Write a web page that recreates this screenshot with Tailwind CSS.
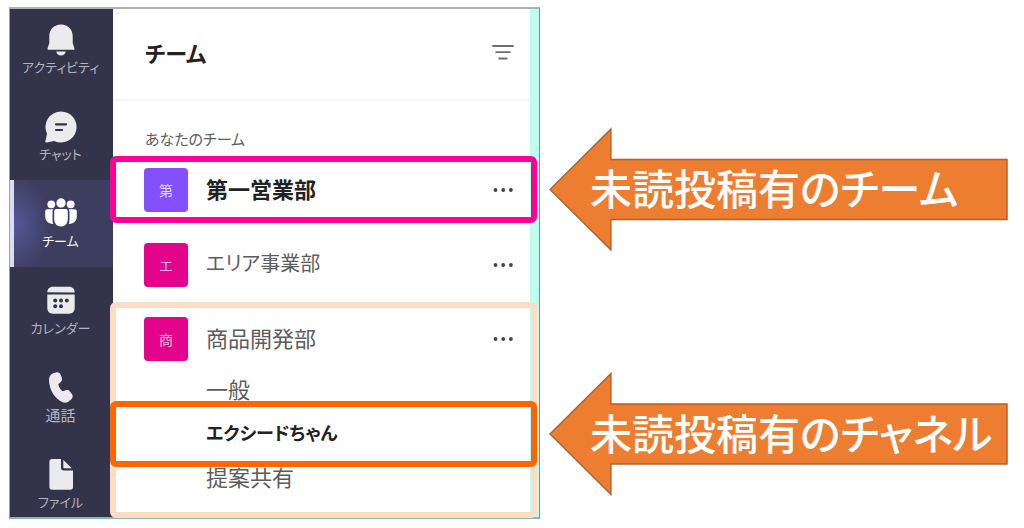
<!DOCTYPE html>
<html lang="ja">
<head>
<meta charset="utf-8">
<meta name="viewport" content="width=device-width, initial-scale=1">
<title>チーム</title>
<script src="https://cdn.jsdelivr.net/npm/@tailwindcss/browser@4"></script>
</head>
<body class="flex items-start gap-[9px] bg-white pt-[7px] pr-4 pl-[9px] font-['Noto_Sans_CJK_JP',sans-serif] [font-feature-settings:'palt']">

<div class="flex min-w-0 flex-1 border-t-2 border-r border-b-2 border-l border-t-[#b0b0b0] border-r-[#7f8f8c] border-b-[#8db5b5] border-l-[#a0a0a8]">
  <!-- App rail -->
  <nav class="flex h-[508px] w-[103px] shrink-0 flex-col overflow-hidden bg-[#33344a] text-[13px] leading-5 whitespace-nowrap text-[#b4b4bf]">
    <a href="#" class="flex h-[84px] shrink-0 flex-col items-center justify-end gap-px pr-[2px] pb-4">
      <svg class="size-8" viewBox="0 0 32 32" fill="#ebebed"><path d="M16 .5C9 .5 4.300 5.500 4.300 12v7L2.600 24.200c-.3 1 .2 1.600 1.100 1.600h24.600c.9 0 1.400-.6 1.100-1.600L27.700 19v-7C27.700 5.500 23 .5 16 .5Z"/><path d="M11.200 27.500h9.600c-.6 2.500-2.500 4-4.800 4s-4.200-1.500-4.800-4Z"/></svg>
      アクティビティ
    </a>
    <a href="#" class="flex h-[87px] shrink-0 flex-col items-center justify-end gap-px pr-[2px] pb-4">
      <svg class="size-8" viewBox="0 0 32 32"><path fill="#ebebed" d="M16 .5a15.500 15.500 0 1 1-6.800 29.400L1.700 31.500c-.9.2-1.500-.5-1.300-1.300L2 22.800A15.500 15.500 0 0 1 16 .5Z"/><path stroke="#33344a" stroke-width="2.200" stroke-linecap="round" d="M11 13.300h10M11 19h6"/></svg>
      チャット
    </a>
    <a href="#" aria-current="page" class="flex h-[87px] shrink-0 flex-col items-center justify-end gap-px border-l-4 border-[#dcdcf5] bg-[#3d3e5f] bg-[radial-gradient(ellipse_36px_50px_at_0px_45px,#54589b,#3d3e5f)] pr-[6px] pb-4 text-white">
      <svg class="size-8" viewBox="0 0 32 32" fill="#fff"><circle cx="6.300" cy="6.300" r="3.900"/><circle cx="25.700" cy="6.300" r="3.900"/><circle cx="16" cy="5" r="4.700"/><path d="M2.500 11.200h6c-.8.8-1 1.600-1 2.800v8c0 1.600.3 2.800.8 4C3.500 26 .2 23 .2 18.500v-5c0-1.400.9-2.300 2.300-2.300ZM29.500 11.200h-6c.8.8 1 1.600 1 2.800v8c0 1.600-.3 2.800-.8 4 4.800 0 8.100-3 8.100-7.500v-5c0-1.400-.9-2.300-2.300-2.300ZM11.500 11h9c1.400 0 2.300.9 2.300 2.300V21c0 4.500-2.700 7.500-6.800 7.500S9.200 25.500 9.200 21v-7.700c0-1.400.9-2.300 2.300-2.300Z"/></svg>
      チーム
    </a>
    <a href="#" class="flex h-[87px] shrink-0 flex-col items-center justify-end gap-px pr-[2px] pb-4">
      <svg class="size-8" viewBox="0 -1 32 32"><path fill="#ebebed" d="M2.300 6.300V6.500C2.300 3 4.500.8 8 .8h16c3.500 0 5.700 2.200 5.700 5.700v.1ZM2.300 8.600h27.400V22c0 3.500-2.200 5.700-5.700 5.700H8c-3.500 0-5.700-2.200-5.700-5.700Z"/><g fill="#33344a"><circle cx="10.200" cy="14.500" r="2"/><circle cx="16" cy="14.500" r="2"/><circle cx="21.800" cy="14.500" r="2"/><circle cx="10.200" cy="20.200" r="2"/><circle cx="16" cy="20.200" r="2"/></g></svg>
      カレンダー
    </a>
    <a href="#" class="flex h-[87px] shrink-0 flex-col items-center justify-end gap-px pr-[2px] pb-4 text-[15px]">
      <svg class="size-8" viewBox="0 0 32 32" fill="#ebebed"><path d="m8.200 1.200 2.500-.8c2.300-.7 4.200.2 5 2.300l1.100 3c.6 1.600.2 3.100-1 4.300l-2.500 2.300c.5 2.600 2 5.200 4.200 7l3.400-1.100c1.500-.5 3-.1 4 1.200l2 2.600c1.200 1.600 1 3.500-.4 4.900l-1.900 1.800c-1.900 1.900-4.500 2.500-6.900 1.500C10 27 4.600 18.500 4 8.500c-.2-3.300 1.400-6.400 4.200-7.300Z"/></svg>
      通話
    </a>
    <a href="#" class="flex h-[87px] shrink-0 flex-col items-center justify-end gap-px pr-[2px] pb-4">
      <svg class="size-8" viewBox="0 0 32 32" fill="#ebebed"><path d="M7.200 0H16v9c0 1.500 1 2.500 2.500 2.500H28V28c0 1.800-1 2.800-2.800 2.800h-18c-1.800 0-2.800-1-2.800-2.800V2.800C4.400 1 5.400 0 7.200 0Z"/><path d="M18.300 1v7c0 .8.400 1.200 1.200 1.200h7.300Z"/></svg>
      ファイル
    </a>
  </nav>

  <!-- Team list -->
  <main class="min-w-0 flex-1 border-r-[9px] border-[#bfffee] bg-white">
    <header class="flex h-[92px] items-center justify-between border-b-2 border-[#f7f7f7] pr-[15px] pb-1 pl-8">
      <h1 class="text-[22px] leading-9 font-bold text-[#222]">チーム</h1>
      <button type="button" aria-label="フィルター">
        <svg class="h-5 w-6" viewBox="0 0 24 20" fill="none" stroke="#6e6e6e" stroke-width="1.800" stroke-linecap="round"><path d="M2 4h20M5.200 10.200h13.600M8.200 16.500h7.600"/></svg>
      </button>
    </header>
    <h2 class="pt-6 pl-8 text-[15px] leading-[27px] text-[#5c5c5c]">あなたのチーム</h2>
    <ul class="text-[22px] leading-8 text-[#5c5c5c]">
      <li class="relative flex h-[75px] items-center pr-[15px] pl-[31px]">
        <span class="flex size-11 items-center justify-center rounded bg-[#8250ff] text-[14px] text-[#e4d9ff]">第</span>
        <a href="#" class="flex-1 pb-1 pl-[18px] font-bold text-[#222]">第一営業部</a>
        <button type="button" aria-label="その他のオプション"><svg class="h-5 w-6" viewBox="0 0 24 20" fill="#444"><circle cx="4.500" cy="10" r="1.900"/><circle cx="12.200" cy="10" r="1.900"/><circle cx="19.900" cy="10" r="1.900"/></svg></button>
        <div class="pointer-events-none absolute -right-[7px] -left-[3px] top-1 bottom-1 rounded-md border-6 border-[#ff0096]"></div>
      </li>
      <li class="flex h-[75px] items-center pr-[15px] pl-[31px]">
        <span class="flex size-11 items-center justify-center rounded bg-[#e3048b] text-[14px] text-[#f9b5dd]">エ</span>
        <a href="#" class="flex-1 pb-1 pl-[18px] text-[20px]">エリア事業部</a>
        <button type="button" aria-label="その他のオプション"><svg class="h-5 w-6" viewBox="0 0 24 20" fill="#444"><circle cx="4.500" cy="10" r="1.900"/><circle cx="12.200" cy="10" r="1.900"/><circle cx="19.900" cy="10" r="1.900"/></svg></button>
      </li>
      <li class="relative">
        <div class="flex h-[66px] items-center pt-2 pr-[15px] pl-[31px]">
          <span class="flex size-11 items-center justify-center rounded bg-[#e3048b] text-[14px] text-[#f9b5dd]">商</span>
          <a href="#" class="flex-1 pb-1 pl-[18px]">商品開発部</a>
          <button type="button" aria-label="その他のオプション"><svg class="h-5 w-6" viewBox="0 0 24 20" fill="#444"><circle cx="4.500" cy="10" r="1.900"/><circle cx="12.200" cy="10" r="1.900"/><circle cx="19.900" cy="10" r="1.900"/></svg></button>
        </div>
        <div class="pointer-events-none absolute -right-[7px] -left-[3px] top-0 -bottom-[1px] rounded-md border-6 border-[#ffdcc5]"></div>
        <ul class="pb-[17px]">
          <li class="flex h-11 items-center pb-1 pl-[93px]"><a href="#">一般</a></li>
          <li class="relative z-10 flex h-11 items-center pb-1 pl-[93px] text-[18px]">
            <a href="#" class="font-bold text-[#222]">エクシードちゃん</a>
            <div class="pointer-events-none absolute -right-[7px] -left-[3px] -top-[11px] -bottom-[11px] rounded-md border-6 border-[#ff6600]"></div>
          </li>
          <li class="flex h-11 items-center pb-1 pl-[93px]"><a href="#">提案共有</a></li>
        </ul>
      </li>
    </ul>
  </main>
</div>

<!-- Callout arrows -->
<aside class="flex w-[459px] shrink-0 flex-col gap-[121px] pt-[120px] text-[42px] leading-[62px] font-medium whitespace-nowrap text-white">
  <p class="relative flex h-[124px] items-center pb-1 pl-[41px]">
    <svg class="absolute inset-0 size-full" viewBox="0 0 460 124"><path fill="#ed7d31" stroke="#b4622b" stroke-width="1.500" d="M1 62.500 62 2v30.500h397v60H62V123Z"/></svg>
    <span class="relative">未読投稿有のチーム</span>
  </p>
  <p class="relative flex h-[124px] items-center pb-1 pl-[41px]">
    <svg class="absolute inset-0 size-full" viewBox="0 0 460 124"><path fill="#ed7d31" stroke="#b4622b" stroke-width="1.500" d="M1 62 62 1.500V32h397v60H62v30.500Z"/></svg>
    <span class="relative">未読投稿有のチャネル</span>
  </p>
</aside>
</body>
</html>
